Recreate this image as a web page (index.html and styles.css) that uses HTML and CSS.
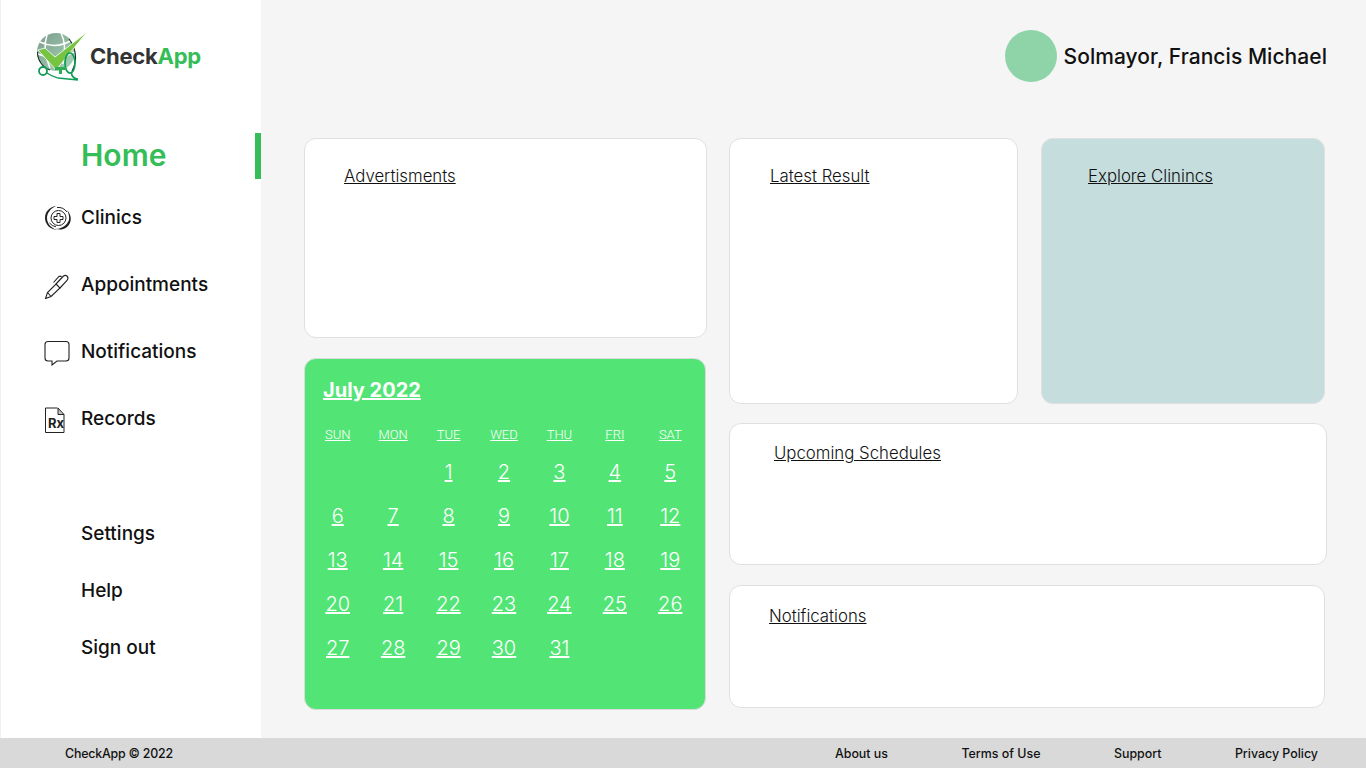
FILE: index.html
```html
<!DOCTYPE html>
<html lang="en">
<head>
  <meta charset="UTF-8" />
  <meta name="viewport" content="width=device-width, initial-scale=1.0"/>
  <title>CheckApp Dashboard</title>
  <link rel="stylesheet" href="styles.css">
</head>
<body>
  <div class="container">
    <aside class="sidebar">
      <div class="logo">
        <svg class="logo-mark" viewBox="0 0 54 52" width="54" height="52" fill="none">
          <defs>
            <linearGradient id="globe" x1="0" y1="0" x2="1" y2="1">
              <stop offset="0" stop-color="#7d9c8c"/>
              <stop offset="1" stop-color="#a5d6b8"/>
            </linearGradient>
          </defs>
          <circle cx="20" cy="22" r="19" fill="url(#globe)"/>
          <path d="M4 12 Q20 20 36 10 M2 24 Q20 32 38 22 M11 5 Q6 20 14 38 M25 3 Q31 14 27 34" stroke="#fff" stroke-width="1.5"/>
          <path d="M1.5 22 A19 19 0 0 0 14 40" stroke="#1c2f26" stroke-width="1.1"/>
          <path d="M33 9 C40 18 42 30 36 41" stroke="#1c2f26" stroke-width="1.1"/>
          <path d="M2 20 L9 18 L19 27 L51 2 L20 40 Z" fill="#76c442" stroke="#fff" stroke-width="0.8"/>
          <ellipse cx="34" cy="33" rx="5" ry="10" stroke="#0f9d58" stroke-width="1.7"/>
          <path d="M35 42 C36 47 38 49 42 49 M22 48 L42 50" stroke="#0f9d58" stroke-width="1.7"/>
          <circle cx="7" cy="41" r="4" stroke="#0f9d58" stroke-width="1.8"/>
          <path d="M11 43 C15 46 19 47 22 48" stroke="#0f9d58" stroke-width="1.3"/>
          <path d="M19 37 H30 V40 H26 V44 H23 V40 H19 Z" fill="#2fae52"/>
        </svg>
        <span class="logo-text">Check<span class="logo-accent">App</span></span>
      </div>
      <nav class="nav">
        <a href="#" class="nav-item active">Home</a>
        <a href="#" class="nav-item">
          <svg class="nav-icon" viewBox="0 0 28 28" fill="none" stroke="#222" stroke-width="1">
            <path d="M12 2 C5 3 1 8 1 14 C1 21 7 26 14 26 C8 25 3 20 3 14 C3 9 7 4 12 2 Z" fill="#222" stroke="none"/>
            <path d="M23 6 C28 11 28 19 23 23 C19 26 15 26 12 24.8 C18 25 23 21 25 16 C25.5 12 24.5 9 23 6 Z" fill="#222" stroke="none"/>
            <path d="M13 3.5 A11 11 0 0 1 23 8 M5.5 19 A10 10 0 0 0 12 22.8"/>
            <circle cx="14.5" cy="14" r="7.5"/>
            <path d="M13 9.5 H16 V12.5 H19 V15.5 H16 V18.5 H13 V15.5 H10 V12.5 H13 Z"/>
          </svg>
          Clinics
        </a>
        <a href="#" class="nav-item">
          <svg class="nav-icon" viewBox="0 0 28 28" fill="none" stroke="#222" stroke-width="1.1">
            <path d="M12 13 L19 5.5 Q21 3.5 23 5 Q25 7 23 9.5 L16 17"/>
            <path d="M12 13 L16 17 L7 25.5 L1.5 27.5 L3.5 21.5 Z"/>
            <path d="M9.5 11.5 L15 5.5 Q16.5 4.5 17.5 6 M3.5 21.5 L7 25.5"/>
          </svg>
          Appointments
        </a>
        <a href="#" class="nav-item">
          <svg class="nav-icon" viewBox="0 0 28 28" fill="none" stroke="#222" stroke-width="1.1">
            <path d="M4 3.5 H22 Q25 3.5 25 6.5 V20 Q25 23 22 23 H13 L8 27 L8 23 H4 Q1 23 1 20 V6.5 Q1 3.5 4 3.5 Z"/>
          </svg>
          Notifications
        </a>
        <a href="#" class="nav-item">
          <svg class="nav-icon" viewBox="0 0 28 28" fill="none" stroke="#222" stroke-width="1">
            <path d="M13.5 3 H1.5 V27.5 H20 V9.5"/>
            <path d="M14 3 L20 9.5 H14 Z" fill="#c4c4c4"/>
            <text x="4" y="23" class="rx-text">Rx</text>
          </svg>
          Records
        </a>
      </nav>
      <nav class="nav-lower">
        <a href="#" class="nav-item">Settings</a>
        <a href="#" class="nav-item">Help</a>
        <a href="#" class="nav-item">Sign out</a>
      </nav>
    </aside>

    <main class="main">
      <div class="top-bar">
        <div class="avatar"></div>
        <div class="user-name">Solmayor, Francis Michael</div>
      </div>

      <div class="board">
        <div class="left-col">
          <section class="card card-ads"><a href="#">Advertisments</a></section>

          <section class="calendar">
            <a href="#" class="cal-title">July 2022</a>
            <div class="cal-grid">
              <a href="#" class="cal-head">SUN</a>
              <a href="#" class="cal-head">MON</a>
              <a href="#" class="cal-head">TUE</a>
              <a href="#" class="cal-head">WED</a>
              <a href="#" class="cal-head">THU</a>
              <a href="#" class="cal-head">FRI</a>
              <a href="#" class="cal-head">SAT</a>
              <span></span><span></span>
              <a href="#">1</a><a href="#">2</a><a href="#">3</a><a href="#">4</a><a href="#">5</a>
              <a href="#">6</a><a href="#">7</a><a href="#">8</a><a href="#">9</a><a href="#">10</a><a href="#">11</a><a href="#">12</a>
              <a href="#">13</a><a href="#">14</a><a href="#">15</a><a href="#">16</a><a href="#">17</a><a href="#">18</a><a href="#">19</a>
              <a href="#">20</a><a href="#">21</a><a href="#">22</a><a href="#">23</a><a href="#">24</a><a href="#">25</a><a href="#">26</a>
              <a href="#">27</a><a href="#">28</a><a href="#">29</a><a href="#">30</a><a href="#">31</a>
            </div>
          </section>
        </div>

        <div class="right-col">
          <div class="right-top">
            <section class="card card-latest"><a href="#">Latest Result</a></section>
            <section class="card card-explore"><a href="#">Explore Clinincs</a></section>
          </div>
          <section class="card card-upcoming"><a href="#">Upcoming Schedules</a></section>
          <section class="card card-notes"><a href="#">Notifications</a></section>
        </div>
      </div>
    </main>
  </div>

  <footer class="footer">
    <span class="copy">CheckApp © 2022</span>
    <div class="footer-links">
      <a href="#">About us</a>
      <a href="#">Terms of Use</a>
      <a href="#">Support</a>
      <a href="#">Privacy Policy</a>
    </div>
  </footer>
</body>
</html>
```
FILE: styles.css
```css
* {
  box-sizing: border-box;
  margin: 0;
  padding: 0;
  font-family: 'Inter', 'Liberation Sans', sans-serif;
}

body {
  height: 768px;
  overflow: hidden;
  background-color: #f5f5f5;
  display: flex;
  flex-direction: column;
}

a {
  color: inherit;
}

.container {
  display: flex;
  flex: 1;
  min-height: 0;
}

.sidebar {
  width: 261px;
  background-color: #fff;
  border-left: 1px solid #f0f0f0;
  padding-top: 30px;
  flex-shrink: 0;
}

.logo {
  display: flex;
  align-items: center;
  height: 52px;
  padding-left: 35px;
}

.logo-mark {
  flex-shrink: 0;
}

.logo-text {
  font-size: 22px;
  font-weight: 700;
  color: #333;
  letter-spacing: -0.25px;
}

.logo-accent {
  color: #35bd57;
  font-weight: 700;
}

.nav {
  margin-top: 51px;
  display: flex;
  flex-direction: column;
}

.nav-item {
  display: flex;
  align-items: center;
  gap: 9px;
  height: 67px;
  padding-left: 80px;
  color: #111;
  font-size: 19px;
  font-weight: 500;
  text-decoration: none;
}

.nav .nav-item:not(.active) {
  padding-left: 43px;
}

.nav-item.active {
  height: 46px;
  margin-bottom: 5px;
  padding-bottom: 2px;
  font-size: 30px;
  font-weight: 600;
  color: #35bd57;
  border-right: 6px solid #35bd57;
}

.nav-icon {
  width: 28px;
  height: 28px;
  flex-shrink: 0;
}

.rx-text {
  font-size: 13px;
  font-weight: 700;
  fill: #222;
  stroke: none;
}

.nav-lower {
  margin-top: 53px;
  display: flex;
  flex-direction: column;
}

.nav-lower .nav-item {
  height: 57px;
}

.main {
  flex: 1;
  min-width: 0;
  padding: 30px 39px 0 43px;
}

.top-bar {
  display: flex;
  justify-content: flex-end;
  align-items: center;
  gap: 7px;
  height: 52px;
  margin-bottom: 56px;
}

.avatar {
  width: 52px;
  height: 52px;
  border-radius: 50%;
  background-color: #8fd4a9;
}

.user-name {
  font-size: 21px;
  font-weight: 500;
  letter-spacing: 0.05px;
  color: #111;
}

.board {
  display: flex;
  gap: 22px;
}

.left-col {
  width: 403px;
  display: flex;
  flex-direction: column;
  gap: 20px;
}

.right-col {
  width: 598px;
  display: flex;
  flex-direction: column;
  gap: 19px;
}

.right-top {
  display: flex;
  gap: 23px;
}

.card {
  background: #fff;
  border: 1px solid #e0e0e0;
  border-radius: 12px;
  font-size: 16.8px;
  font-weight: 300;
  line-height: 20px;
  color: #111;
}

.card-ads {
  height: 200px;
  padding: 27px 0 0 39px;
}

.card-latest {
  width: 289px;
  height: 266px;
  padding: 27px 0 0 40px;
}

.card-explore {
  width: 284px;
  height: 266px;
  padding: 27px 0 0 46px;
  background: #c5dddd;
}

.card-upcoming {
  height: 142px;
  padding: 19px 0 0 44px;
}

.card-notes {
  width: 596px;
  height: 123px;
  margin-top: 1px;
  padding: 20px 0 0 39px;
}

.calendar {
  width: 402px;
  height: 352px;
  background: #52e575;
  border: 1px solid #dcdcdc;
  border-radius: 12px;
  padding: 19px 7px 0 5px;
  color: #fff;
}

.cal-title {
  display: block;
  margin-left: 13px;
  font-size: 20px;
  font-weight: 700;
  line-height: 24px;
}

.cal-grid {
  display: grid;
  grid-template-columns: repeat(7, 1fr);
  grid-template-rows: 30px repeat(5, 44px);
  margin-top: 18px;
  text-align: center;
  font-size: 20px;
  font-weight: 300;
  line-height: 44px;
}

.cal-head {
  font-family: 'Roboto', sans-serif;
  font-size: 13px;
  font-weight: 300;
  line-height: 30px;
}

.footer {
  height: 30px;
  flex-shrink: 0;
  background-color: #d9d9d9;
  display: flex;
  justify-content: space-between;
  align-items: center;
  padding: 0 48px 0 65px;
  font-size: 12.4px;
  font-weight: 500;
  color: #111;
}

.copy {
  letter-spacing: -0.2px;
}

.footer-links {
  display: flex;
  gap: 73.5px;
}

.footer-links a {
  text-decoration: none;
}
```
